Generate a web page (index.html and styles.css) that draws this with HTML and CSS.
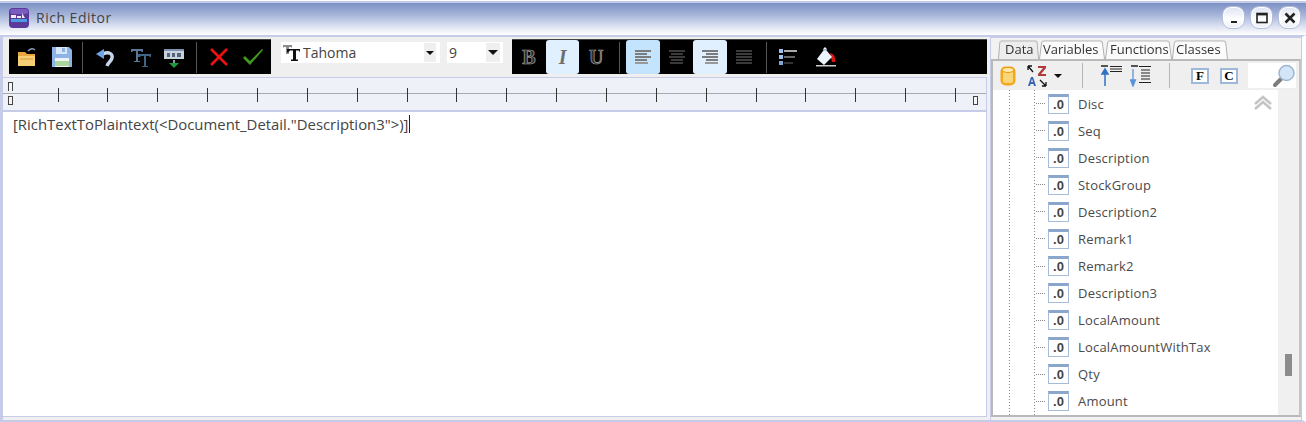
FILE: index.html
```html
<!DOCTYPE html>
<html lang="en">
<head>
<meta charset="utf-8">
<title>Rich Editor</title>
<link rel="stylesheet" href="styles.css">
</head>
<body>
<div class="window">
  <header class="titlebar">
    <svg class="app-icon" width="20" height="20" viewBox="0 0 20 20"><rect width="20" height="20" rx="4" fill="#5b3a9c"/><rect x="1" y="1" width="18" height="5" rx="3" fill="#7a5cc0"/><path d="M2 7h5v3H2zM8 8h4v2H8zM13 5l3 5h-3z" fill="#eeeaf8"/><rect x="2" y="11" width="16" height="3" fill="#4a9be0"/></svg>
    <span class="title">Rich Editor</span>
    <div class="win-buttons">
      <div class="win-btn"><svg width="12" height="12" viewBox="0 0 12 12"><rect x="3" y="9" width="6" height="2" fill="#222"/></svg></div>
      <div class="win-btn"><svg width="12" height="12" viewBox="0 0 12 12"><rect x="1" y="1.5" width="10" height="9" fill="none" stroke="#222" stroke-width="1.6"/><rect x="1" y="1" width="10" height="2.4" fill="#222"/></svg></div>
      <div class="win-btn"><svg width="12" height="12" viewBox="0 0 12 12"><path d="M1.5 1.5 10.5 10.5M10.5 1.5 1.5 10.5" stroke="#222" stroke-width="2.6"/></svg></div>
    </div>
  </header>
  <div class="content">
    <main class="main-pane">
      <div class="toolbar">
        <div class="blackbar bar-a">
          <button class="tool w35"><svg width="24" height="24" viewBox="0 0 24 24"><path d="M13 6q4-4 7-1" fill="none" stroke="#8a9bb5" stroke-width="1.6"/><path d="M3 7h7l2 2h8v12H3z" fill="#e9a83e"/><path d="M3 11h17v10H3z" fill="#f7cf75"/><path d="M5 14h13" stroke="#d99a33"/></svg></button>
          <button class="tool w35"><svg width="22" height="22" viewBox="0 0 22 22"><path d="M1 1h17l3 3v17H1z" fill="#8db4e6"/><rect x="5" y="1" width="11" height="7" fill="#d7e6f8"/><rect x="11" y="2" width="3" height="4" fill="#8db4e6"/><rect x="4" y="12" width="14" height="9" fill="#f0f4f8"/><rect x="4" y="15" width="14" height="5" fill="#a9d49b"/></svg></button>
          <i class="sep s-a"></i>
          <button class="tool w36"><svg width="22" height="22" viewBox="0 0 22 22"><path d="M8 8c6-3 10 0 9 4s-4 4-5 8" fill="none" stroke="#c7d6ea" stroke-width="3.4"/><path d="M1 8l8-5v10z" fill="#6fa5e6"/></svg></button>
          <button class="tool w34"><svg width="22" height="22" viewBox="0 0 22 22"><path d="M1 3h12v3h-1l-1-1H8v10h2v1H4v-1h2V5H3L2 6H1z" fill="#5c7895"/><path d="M8 8h13v3h-1l-1-1h-3v10h2v1h-6v-1h2V10h-3l-1 1H8z" fill="#406484"/></svg></button>
          <button class="tool w32"><svg width="22" height="24" viewBox="0 0 22 24"><rect x="1" y="4" width="20" height="10" fill="#c9d2df"/><rect x="1" y="4" width="20" height="2" fill="#7d93b0"/><path d="M4 8h3v4H4zM9 8h3v4H9zM14 8h4v4h-4z" fill="#566478"/><rect x="10" y="15" width="2" height="3" fill="#8b98a8"/><path d="M6 18h10l-5 5z" fill="#1f9a3c"/></svg></button>
          <i class="sep s-b"></i>
          <button class="tool w34"><svg width="20" height="20" viewBox="0 0 20 20"><path d="M2 2 18 18M18 2 2 18" stroke="#ee1111" stroke-width="2.6"/></svg></button>
          <button class="tool w34"><svg width="22" height="20" viewBox="0 0 22 20"><path d="M1 11l2-2 5 5L20 2l1 1L8 18z" fill="#3f9a1f"/></svg></button>
        </div>
        <div class="combo font-combo">
          <svg class="font-icon" width="18" height="18" viewBox="0 0 18 18"><path d="M0 1h9v3L8 3H6v7H3V3H1L0 4z" fill="#8c8c8c"/><path d="M4 5h13v3.500l-1-2h-3v9h2v1.500H8V15.500h2v-9H7l-2 2H4z" fill="#111"/></svg>
          <span class="combo-text">Tahoma</span>
          <span class="combo-arrow small"></span>
        </div>
        <div class="combo size-combo">
          <span class="combo-text">9</span>
          <span class="combo-arrow"></span>
        </div>
        <div class="blackbar bar-b">
          <button class="tool btn-fmt glyph g-b">B</button>
          <button class="tool btn-fmt soft glyph g-i">I</button>
          <button class="tool btn-fmt glyph g-u">U</button>
          <i class="sep s-c"></i>
          <button class="tool btn-fmt active"><span class="lines"><i></i><i class="s"></i><i></i><i class="s"></i><i class="xs"></i></span></button>
          <button class="tool btn-fmt"><span class="lines a-center dim"><i></i><i class="s"></i><i></i><i class="s"></i><i class="xs"></i></span></button>
          <button class="tool btn-fmt soft"><span class="lines a-right"><i></i><i class="s"></i><i></i><i class="s"></i><i class="xs"></i></span></button>
          <button class="tool btn-fmt"><span class="lines dim"><i></i><i></i><i></i><i></i><i></i></span></button>
          <i class="sep s-d"></i>
          <button class="tool w40"><svg width="20" height="18" viewBox="0 0 20 18"><rect x="1" y="1" width="4" height="4" fill="#9cc1ee"/><rect x="1" y="7" width="4" height="4" fill="#9cc1ee"/><rect x="1" y="13" width="4" height="4" fill="#7ea6da"/><rect x="6" y="2" width="13" height="2" fill="#aaa"/><rect x="6" y="8" width="11" height="2" fill="#666"/><rect x="6" y="14" width="9" height="2" fill="#333"/></svg></button>
          <button class="tool w36"><svg width="24" height="22" viewBox="0 0 24 22"><path d="M16 7q6 1 5 9l-3 0z" fill="#e01616"/><path d="M11 1q-2 1-2 4L3 13l7 6 8-8-5-6q0-3-2-4z" fill="#eef4fb"/><path d="M9 5q2-3 4 0" fill="none" stroke="#7d93b0"/><rect x="2" y="19" width="20" height="1.500" fill="#ccc"/></svg></button>
        </div>
      </div>
      <div class="ruler">
        <i class="marker m-top"></i>
        <i class="marker m-bottom"></i>
        <i class="marker m-right"></i>
        <div class="ticks">
          <i></i><i></i><i></i><i></i><i></i><i></i><i></i><i></i><i></i><i></i><i></i><i></i><i></i><i></i><i></i><i></i><i></i><i></i><i></i>
        </div>
      </div>
      <div class="editor"><span class="editor-text">[RichTextToPlaintext(&lt;Document_Detail."Description3"&gt;)]</span><i class="caret"></i></div>
    </main>
    <aside class="side-pane">
      <nav class="tabs">
        <span class="tab t-data">Data</span>
        <span class="tab t-var">Variables</span>
        <span class="tab t-fun">Functions</span>
        <span class="tab t-cla">Classes</span>
      </nav>
      <div class="panel">
        <div class="panel-tools">
          <svg class="p-db" width="16" height="20" viewBox="0 0 16 20"><rect x="0.500" y="0.500" width="15" height="19" rx="5" fill="#f4a81d"/><rect x="3" y="4" width="10" height="13" rx="2" fill="#f9d678"/><ellipse cx="8" cy="4" rx="6" ry="2.500" fill="#fde9a8" stroke="#e89a10"/></svg>
          <svg class="p-az" width="20" height="22" viewBox="0 0 20 22"><path d="M1 1l5 6M1 1v4M1 1h4" stroke="#111" fill="none" stroke-width="1.300"/><path d="M11 1h8v2l-5 6h5v2h-8V9l5-6h-5z" fill="#b03a3a"/><path d="M1 21l3-9h2l3 9H7l-.6-2H3.600L3 21zM4 17h2l-1-3z" fill="#3565b0"/><path d="M19 21l-6-6M19 21v-4M19 21h-4" stroke="#111" fill="none" stroke-width="1.300"/></svg>
          <span class="p-drop"></span>
          <i class="psep ps-a"></i>
          <svg class="p-up" width="22" height="22" viewBox="0 0 22 22"><path d="M1 1h7" stroke="#222" stroke-width="1.500"/><path d="M5 21V7M2 9 5 4l3 5z" stroke="#2f73c4" fill="#2f73c4" stroke-width="1.500"/><path d="M10 1.500h12M10 4h12M10 6.500h12" stroke="#222"/></svg>
          <svg class="p-down" width="22" height="22" viewBox="0 0 22 22"><path d="M1 1h7" stroke="#222" stroke-width="1.500"/><path d="M3 4v13M0.500 15 3 21l2.500-6z" stroke="#5a94d8" fill="#5a94d8" stroke-width="1.300"/><path d="M9 1.500h12M11 5h9M11 8h9M11 11h9M11 14h9M9 17.500h12" stroke="#222"/></svg>
          <i class="psep ps-b"></i>
          <span class="p-letter l-f">F</span>
          <span class="p-letter l-c">C</span>
          <span class="search"><svg width="24" height="24" viewBox="0 0 24 24"><path d="M3 21l6-6" stroke="#7d7d7d" stroke-width="4" stroke-linecap="round"/><circle cx="14.500" cy="9" r="7.500" fill="#d3e6f8" stroke="#9db6cf" stroke-width="1.500"/></svg></span>
        </div>
        <div class="tree-wrap">
          <div class="tree">
            <svg class="chevrons" width="18" height="16" viewBox="0 0 18 16"><path d="M1 9 9 2l8 7M1 14l8-7 8 7" fill="none" stroke="#c4c4c4" stroke-width="2.600"/></svg>
            <div class="row"><i class="dots"></i><span class="num">.0</span><span>Disc</span></div>
            <div class="row"><i class="dots"></i><span class="num">.0</span><span>Seq</span></div>
            <div class="row"><i class="dots"></i><span class="num">.0</span><span>Description</span></div>
            <div class="row"><i class="dots"></i><span class="num">.0</span><span>StockGroup</span></div>
            <div class="row"><i class="dots"></i><span class="num">.0</span><span>Description2</span></div>
            <div class="row"><i class="dots"></i><span class="num">.0</span><span>Remark1</span></div>
            <div class="row"><i class="dots"></i><span class="num">.0</span><span>Remark2</span></div>
            <div class="row"><i class="dots"></i><span class="num">.0</span><span>Description3</span></div>
            <div class="row"><i class="dots"></i><span class="num">.0</span><span>LocalAmount</span></div>
            <div class="row"><i class="dots"></i><span class="num">.0</span><span>LocalAmountWithTax</span></div>
            <div class="row"><i class="dots"></i><span class="num">.0</span><span>Qty</span></div>
            <div class="row"><i class="dots"></i><span class="num">.0</span><span>Amount</span></div>
          </div>
          <div class="scrollbar"><i class="thumb"></i></div>
        </div>
      </div>
    </aside>
  </div>
</div>
</body>
</html>
```

FILE: styles.css
```css
* { box-sizing: border-box; }
html, body { margin: 0; padding: 0; }
body {
  width: 1306px;
  height: 422px;
  overflow: hidden;
  background: #fff;
  font-family: "Open Sans", "Noto Sans", sans-serif;
  color: #444;
}
.window {
  width: 1306px;
  height: 422px;
  display: flex;
  flex-direction: column;
  border-top: 1px solid #fff;
  background: #f0f0f0;
}
.titlebar {
  height: 34px;
  flex: none;
  display: flex;
  align-items: center;
  padding: 0 5px 3px 9px;
  border-top: 2px solid #c3cbe8;
  background: linear-gradient(#7c91c4 0%, #a3b2d8 35%, #dfe4f2 75%, #fff 100%);
}
.app-icon { flex: none; }
.title {
  margin-left: 7px;
  font-size: 14px;
  letter-spacing: 0.5px;
  color: #444;
}
.win-buttons { margin-left: auto; display: flex; gap: 5px; }
.win-btn {
  width: 23px;
  height: 23px;
  display: flex;
  align-items: center;
  justify-content: center;
  border: 1px solid #b4bedb;
  border-radius: 9px;
  background: linear-gradient(#dfe4f2, #fff 60%, #e9edf6);
  box-shadow: inset 0 0 0 1px #fff;
}
.content {
  flex: 1;
  display: flex;
  min-height: 0;
  border-top: 2px solid #c6cbe8;
  border-left: 3px solid #c6cbe8;
  border-right: 4px solid #fff;
  border-bottom: 2px solid #c6cbe8;
}
.main-pane {
  width: 984px;
  flex: none;
  display: flex;
  flex-direction: column;
  background: #fff;
  border-bottom: 3px solid #f0f0f0;
}
.toolbar {
  height: 41px;
  flex: none;
  display: flex;
  align-items: flex-start;
  padding: 2px 0 0 6px;
  background: #efefef;
  border-bottom: 1px solid #c6cbe8;
}
.blackbar {
  height: 35px;
  display: flex;
  align-items: center;
  background: #000;
  border-top: 1px solid #444;
}
.bar-a { width: 262px; }
.bar-b { flex: 1; margin-left: 9px; }
.tool {
  height: 100%;
  padding: 0;
  border: 0;
  background: transparent;
  display: flex;
  align-items: center;
  justify-content: center;
  flex: none;
  font: inherit;
}
.w32 { width: 32px; }
.w34 { width: 34px; }
.w35 { width: 35px; }
.w36 { width: 36px; }
.w40 { width: 40px; margin-left: 1px; }
.sep { width: 1px; height: 31px; background: #555; flex: none; }
.s-a { margin: 0 5px 0 3px; }
.s-b { margin: 0 5px 0 6px; }
.s-c { margin: 0 6px 0 6px; }
.s-d { margin: 0 0 0 5px; }
.btn-fmt { width: 33.700px; }
.btn-fmt.soft { background: #e0f0ff; border-radius: 3px; }
.btn-fmt.active { background: #c4e3fd; border-radius: 3px; }
.glyph { font-family: "Liberation Serif", serif; font-size: 20px; font-weight: 700; }
.g-b { color: #2c2c2c; -webkit-text-stroke: 0.7px #a6a6a6; }
.g-i { color: #6e6e6e; font-style: italic; }
.g-u { color: #2c2c2c; -webkit-text-stroke: 0.7px #a6a6a6; }
.lines { width: 16px; display: flex; flex-direction: column; gap: 1px; align-items: flex-start; }
.lines i { display: block; height: 2px; width: 16px; background: #7c7c7c; }
.lines i.s { width: 12px; }
.lines i.xs { width: 13px; background: #999; }
.lines.a-center { align-items: center; }
.lines.a-right { align-items: flex-end; }
.lines.dim i { background: #3a3a3a; }
.combo {
  height: 21px;
  flex: none;
  display: flex;
  align-items: center;
  background: #fff;
  font-size: 14px;
  margin-top: 3px;
}
.font-combo { width: 159px; margin-left: 10px; padding-left: 2px; }
.size-combo { width: 56px; margin-left: 7px; padding-left: 2px; }
.font-icon { margin-right: 2px; flex: none; }
.combo-text { flex: 1; color: #444; }
.combo-arrow {
  width: 14px;
  height: 19px;
  flex: none;
  margin-right: 3px;
  background: #efefef;
  position: relative;
}
.combo-arrow::after {
  content: "";
  position: absolute;
  left: 2px;
  top: 7px;
  border-left: 5px solid transparent;
  border-right: 5px solid transparent;
  border-top: 5px solid #111;
}
.combo-arrow.small { margin-right: 4px; width: 12px; }
.combo-arrow.small::after {
  left: 2px;
  top: 8px;
  border-left-width: 4px;
  border-right-width: 4px;
  border-top-width: 4px;
}
.ruler {
  position: relative;
  height: 34px;
  flex: none;
  background: #eef1f8;
  border-bottom: 2px solid #c6cbe8;
  border-right: 1px solid #c6cbe8;
  display: flex;
  align-items: center;
}
.ruler::before {
  content: "";
  position: absolute;
  left: 0;
  right: 0;
  top: 15px;
  height: 1px;
  background: #aaa;
}
.marker {
  position: absolute;
  width: 5px;
  height: 9px;
  background: #f5f5f5;
  border: 1px solid #444;
}
.m-top { left: 5px; top: 4px; border-bottom: 0; }
.m-bottom { left: 5px; top: 18px; }
.m-right { right: 8px; top: 18px; }
.ticks { display: flex; position: relative; padding-left: 54.500px; margin-top: 1px; }
.ticks i { width: 49.870px; height: 14px; flex: none; position: relative; }
.ticks i::before { content: ""; position: absolute; left: 0; top: 0; width: 1px; height: 14px; background: #333; }
.editor {
  flex: 1;
  display: flex;
  align-items: flex-start;
  padding: 2px 0 0 10px;
  background: #fff;
  min-height: 0;
  border-bottom: 1px solid #c6cbe8;
  border-right: 1px solid #c6cbe8;
}
.editor-text { font-size: 14.900px; line-height: 20px; color: #444; white-space: pre; }
.caret { width: 1px; height: 18px; background: #222; margin: 1px 0 0 1px; }
.side-pane {
  flex: 1;
  min-width: 0;
  margin-left: 3px;
  display: flex;
  flex-direction: column;
  background: #f2f2f2;
  border-left: 1px solid #c6cbe8;
  border-right: 1px solid #c6cbe8;
  border-top: 1px solid #c6cbe8;
}
.tabs {
  height: 21px;
  flex: none;
  display: flex;
  align-items: flex-end;
  padding-left: 7px;
}
.tab {
  position: relative;
  z-index: 0;
  height: 20px;
  padding: 1px 0 0 4px;
  font-size: 13px;
  line-height: 19px;
  color: #333;
}
.tab::before {
  content: "";
  position: absolute;
  inset: 0;
  z-index: -1;
  background: #fbfbfb;
  border: 1px solid #b0b0b0;
  border-bottom: 0;
  border-radius: 3px 3px 0 0;
  transform: perspective(26px) rotateX(6deg);
  transform-origin: bottom;
}
.t-data { width: 41px; padding-left: 7px; }
.t-data::before { background: #ededed; }
.t-var { width: 66px; }
.t-fun { width: 67px; padding-left: 5px; }
.t-cla { width: 56px; }
.panel {
  flex: 1;
  min-height: 0;
  display: flex;
  flex-direction: column;
  border: 2px solid #b9b9b9;
  border-right-color: #c4c4c4;
  background: #f0f0f0;
  margin-bottom: 3px;
}
.panel-tools {
  height: 29px;
  flex: none;
  display: flex;
  align-items: center;
  background: #efefef;
}
.p-db { margin-left: 7px; flex: none; }
.p-az { margin-left: 11px; flex: none; }
.p-drop {
  margin-left: 7px;
  width: 0;
  height: 0;
  border-left: 4px solid transparent;
  border-right: 4px solid transparent;
  border-top: 4px solid #111;
  flex: none;
}
.psep { width: 1px; height: 25px; background: #b5b5b5; flex: none; }
.ps-a { margin-left: 20px; }
.ps-b { margin-left: 17px; }
.p-up { margin-left: 17px; flex: none; }
.p-down { margin-left: 8px; flex: none; }
.p-letter {
  width: 18px;
  height: 16px;
  flex: none;
  display: flex;
  align-items: center;
  justify-content: center;
  font: 700 13px/1 "Liberation Serif", serif;
  color: #000;
  background: #fff;
  border: 2px solid #9db8d8;
}
.l-f { margin-left: 21px; }
.l-c { margin-left: 11px; }
.search {
  margin-left: 10px;
  width: 48px;
  height: 25px;
  background: #fff;
  display: flex;
  justify-content: flex-end;
  align-items: center;
  flex: none;
}
.tree-wrap { flex: 1; min-height: 0; display: flex; }
.tree {
  position: relative;
  width: 285px;
  flex: none;
  overflow: hidden;
  background-color: #fff;
  background-image:
    repeating-linear-gradient(#888 0 1px, transparent 1px 3px),
    repeating-linear-gradient(#888 0 1px, transparent 1px 3px);
  background-size: 1px 100%, 1px 100%;
  background-position: 16px 0, 41px 0;
  background-repeat: no-repeat;
}
.chevrons { position: absolute; left: 261px; top: 5px; }
.row {
  height: 27.090px;
  display: flex;
  align-items: center;
  padding-left: 43px;
  font-size: 13px;
  letter-spacing: 0.2px;
  color: #4a4a4a;
  white-space: nowrap;
}
.dots { width: 10px; height: 1px; flex: none; background: repeating-linear-gradient(90deg, #888 0 1px, transparent 1px 2px); }
.num {
  width: 21px;
  height: 20px;
  flex: none;
  margin: 0 9px 0 2px;
  border: 1px solid #a7bcd8;
  border-top: 3px solid #8aa6cc;
  background: #fff;
  color: #444;
  font: 700 13px/16px "Liberation Sans", sans-serif;
  letter-spacing: 0;
  text-align: center;
}
.scrollbar { flex: 1; background: #f0f0f0; padding: 264px 0 0 7px; }
.thumb { display: block; width: 7px; height: 22px; background: #8c8c8c; }
```
